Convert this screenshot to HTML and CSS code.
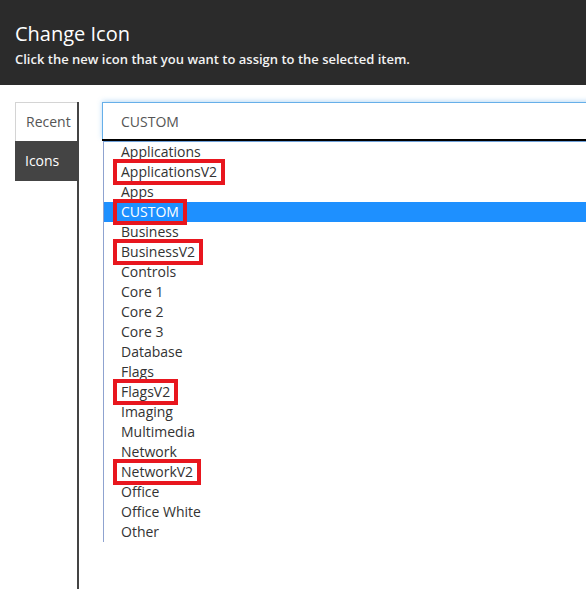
FILE: index.html
```html
<!DOCTYPE html>
<html>
<head>
<meta charset="utf-8">
<link rel="stylesheet" href="styles.css">
</head>
<body>
<header class="header">
  <h1 class="title">Change Icon</h1>
  <p class="subtitle">Click the new icon that you want to assign to the selected item.</p>
</header>
<div class="main">
  <nav class="tabs">
    <div class="tab tab-recent">Recent</div>
    <div class="tab tab-icons">Icons</div>
  </nav>
  <div class="content">
    <div class="select">CUSTOM</div>
    <ul class="list">
      <li class="item">Applications</li>
      <li class="item"><span class="mark">ApplicationsV2</span></li>
      <li class="item">Apps</li>
      <li class="item selected"><span class="mark">CUSTOM</span></li>
      <li class="item">Business</li>
      <li class="item"><span class="mark">BusinessV2</span></li>
      <li class="item">Controls</li>
      <li class="item">Core 1</li>
      <li class="item">Core 2</li>
      <li class="item">Core 3</li>
      <li class="item">Database</li>
      <li class="item">Flags</li>
      <li class="item"><span class="mark">FlagsV2</span></li>
      <li class="item">Imaging</li>
      <li class="item">Multimedia</li>
      <li class="item">Network</li>
      <li class="item"><span class="mark">NetworkV2</span></li>
      <li class="item">Office</li>
      <li class="item">Office White</li>
      <li class="item">Other</li>
    </ul>
  </div>
</div>
</body>
</html>
```
FILE: styles.css
```css
html, body {
  margin: 0;
  padding: 0;
  width: 586px;
  height: 589px;
  overflow: hidden;
  background: #fff;
  font-family: "Open Sans", "Noto Sans", sans-serif;
}

.header {
  height: 85px;
  box-sizing: border-box;
  background: #2b2b2b;
  padding: 22px 0 0 15px;
  color: #fff;
}

.title {
  margin: 0;
  font-size: 20px;
  line-height: 24px;
  font-weight: 400;
}

.subtitle {
  margin: 3px 0 0;
  font-size: 13px;
  line-height: 20px;
  font-weight: 600;
  color: #f2f2f2;
}

.main {
  display: flex;
  padding: 17px 0 0 15px;
  height: 504px;
  box-sizing: border-box;
}

.tabs {
  width: 62px;
  border-right: 2px solid #444;
  flex: none;
}

.tab {
  font-size: 14px;
  line-height: 20px;
  box-sizing: border-box;
}

.tab-recent {
  height: 39px;
  padding: 9px 0 0 10px;
  border-top: 1px solid #d4d4d4;
  border-left: 1px solid #d4d4d4;
  color: #555;
}

.tab-icons {
  height: 40px;
  padding: 10px 0 0 10px;
  background: #444;
  color: #fff;
}

.content {
  margin-left: 23px;
  width: 620px;
  flex: none;
}

.select {
  height: 37px;
  box-sizing: border-box;
  border: 1px solid #66afe9;
  border-bottom: none;
  box-shadow: 0 -1px 5px rgba(102, 175, 233, 0.45);
  padding: 9px 0 0 18px;
  font-size: 14px;
  line-height: 20px;
  color: #555;
  background: #fff;
  position: relative;
}

.select::after {
  content: "";
  position: absolute;
  left: -1px;
  right: -1px;
  bottom: -2px;
  height: 2px;
  background: #000;
}

.list {
  list-style: none;
  margin: 2px 0 0 1px;
  padding: 0;
  border-top: 1px solid #6f9fd8;
  border-left: 1px solid #8fa3d0;
}

.item {
  height: 20px;
  line-height: 20px;
  font-size: 14px;
  color: #333;
  padding-left: 17px;
}

.item.selected {
  background: #1e90ff;
  color: #fff;
}

.mark {
  position: relative;
  display: inline-block;
}

.mark::after {
  content: "";
  position: absolute;
  left: -8px;
  right: -8px;
  top: -3px;
  bottom: -3px;
  border: 4px solid #e8161e;
}
```
